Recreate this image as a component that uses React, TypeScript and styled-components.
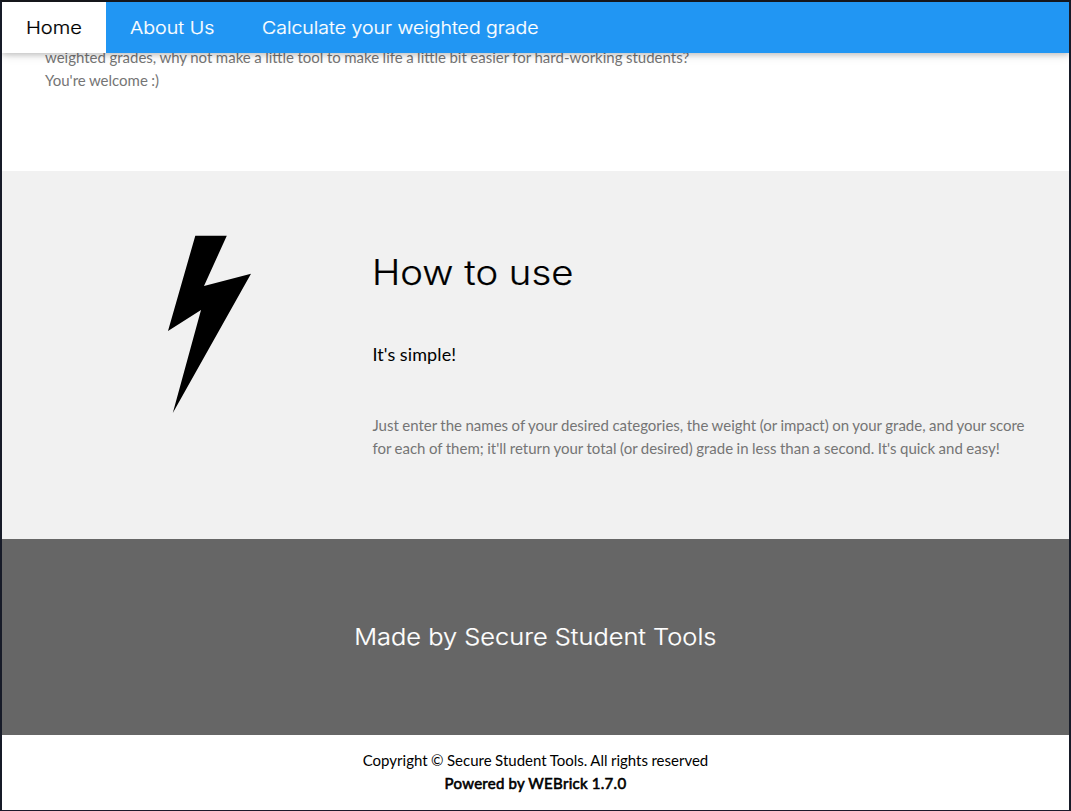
import React from "react";
import styled, { createGlobalStyle } from "styled-components";

const GlobalStyle = createGlobalStyle`
  * { box-sizing: border-box; }
  body { margin: 0; background: #fff; overflow: hidden; }
`;

const Frame = styled.div`
  display: flex;
  flex-direction: column;
  height: 811px;
  border: 2px solid #171b28;
  border-top-color: #15161b;
  border-bottom: 1px solid #1d1b2b;
  background: #fff;
  color: #000;
  font-family: Lato, sans-serif;
  font-size: 15px;
  line-height: 22.5px;
  word-spacing: -0.35px;
  overflow: hidden;
`;

const Nav = styled.nav`
  display: flex;
  flex: none;
  height: 51px;
  background: #2196f3;
  position: relative;
  z-index: 1;
  box-shadow: 0 2px 5px 0 rgba(0, 0, 0, 0.16), 0 2px 10px 0 rgba(0, 0, 0, 0.12);
`;

const NavLink = styled.a<{ $width: number; $active?: boolean }>`
  width: ${(p) => p.$width}px;
  padding: 12px 23.5px;
  white-space: nowrap;
  background: ${(p) => (p.$active ? "#fff" : "transparent")};
  color: ${(p) => (p.$active ? "#000" : "#fff")};
`;

const Display = styled.span<{ $size: number; $stretch: number; $origin?: string }>`
  display: inline-block;
  font-family: Inter, sans-serif;
  font-weight: 300;
  font-size: ${(p) => p.$size}px;
  line-height: 27px;
  word-spacing: 0;
  white-space: nowrap;
  -webkit-text-stroke: 0.2px currentColor;
  transform: scaleX(${(p) => p.$stretch});
  transform-origin: ${(p) => p.$origin ?? "left"} center;
`;

const Intro = styled.section`
  flex: none;
  height: 118px;
  padding: 0 43px;
  color: #757575;
`;

const IntroText = styled.p`
  margin: -7px 0 0;
`;

const HowTo = styled.section`
  display: flex;
  flex: none;
  height: 368px;
  background: #f1f1f1;
`;

const IconColumn = styled.div`
  width: 370.4px;
  padding: 64px 0 0 165px;
`;

const Bolt = styled.svg`
  display: block;
`;

const Copy = styled.div`
  flex: 1;
  padding-top: 74px;
`;

const Title = styled.h1`
  margin: 0;
  height: 54px;
  display: flex;
  align-items: center;
`;

const Lead = styled.h5`
  margin: 42px 0 0;
  font-size: 18px;
  font-weight: 400;
  line-height: 27px;
  letter-spacing: 0.12px;
`;

const Body = styled.p`
  margin: 46px 0 0;
  color: #757575;
  white-space: nowrap;
`;

const Banner = styled.section`
  display: flex;
  flex: none;
  align-items: center;
  justify-content: center;
  height: 196px;
  background: #666;
  color: #fff;
`;

const Footer = styled.footer`
  flex: none;
  padding-top: 14px;
  text-align: center;
`;

const Powered = styled.div`
  letter-spacing: 0.3px;
  -webkit-text-stroke: 0.6px currentColor;
`;

export default function App() {
  return (
    <>
      <GlobalStyle />
      <Frame>
        <Nav>
          <NavLink $width={104} $active><Display $size={17.4} $stretch={1.155}>Home</Display></NavLink>
          <NavLink $width={132}><Display $size={17.4} $stretch={1.13}>About Us</Display></NavLink>
          <NavLink $width={324}><Display $size={17.4} $stretch={1.12}>Calculate your weighted grade</Display></NavLink>
        </Nav>
        <Intro>
          <IntroText>
            weighted grades, why not make a little tool to make life a little bit easier for hard-working students?
            <br />
            You're welcome :)
          </IntroText>
        </Intro>
        <HowTo>
          <IconColumn>
            <Bolt width="86" height="180" viewBox="0 0 86 180">
              <path d="M28.3 .7H59.8L37 51L84 38.8L5.8 178L34 75L1 96Z" fill="#000" />
            </Bolt>
          </IconColumn>
          <Copy>
            <Title><Display $size={34.8} $stretch={1.1}>How to use</Display></Title>
            <Lead>It's simple!</Lead>
            <Body>
              Just enter the names of your desired categories, the weight (or impact) on your grade, and your score
              <br />
              for each of them; it'll return your total (or desired) grade in less than a second. It's quick and easy!
            </Body>
          </Copy>
        </HowTo>
        <Banner>
          <Display $size={23.2} $stretch={1.096} $origin="center">Made by Secure Student Tools</Display>
        </Banner>
        <Footer>
          <div>Copyright © Secure Student Tools. All rights reserved</div>
          <Powered>Powered by WEBrick 1.7.0</Powered>
        </Footer>
      </Frame>
    </>
  );
}
